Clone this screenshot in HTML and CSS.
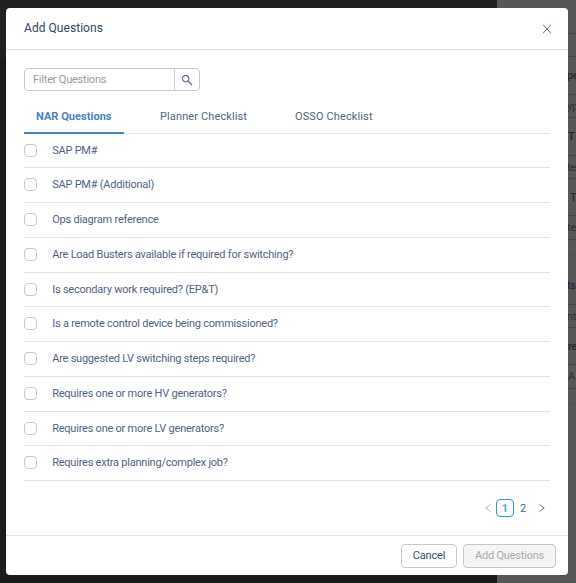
FILE: index.html
```html
<!DOCTYPE html>
<html lang="en">
<head>
<meta charset="utf-8">
<title>Add Questions</title>
<link rel="stylesheet" href="styles.css">
</head>
<body>
<div class="backdrop">
  <div class="canvas"></div>
  <div class="panel">
    <div class="r h34"></div>
    <div class="r h23"></div>
    <div class="r h38 label">pe</div>
    <div class="r h23">yp</div>
    <div class="r h38 label navy gap2">T</div>
    <div class="r h23">te</div>
    <div class="r h37 label gap4">T</div>
    <div class="r h24">te</div>
    <div class="r h15 faint"></div>
    <div class="r h50 label navy low">ts</div>
    <div class="r h23">nt</div>
    <div class="r h37 label gap1">re</div>
    <div class="r h24 gap1">A</div>
    <div class="r h15 faint"></div>
  </div>
</div>
<main class="modal">
  <header class="head">
    <h1>Add Questions</h1>
    <svg class="close" viewBox="0 0 10 10"><path d="M1 .7 9 9.3M9 .7 1 9.3"/></svg>
  </header>
  <section class="body">
    <div class="search">
      <span class="field">Filter Questions</span>
      <span class="go"><svg viewBox="0 0 12 12"><circle cx="4.6" cy="4.6" r="3.2"/><path d="M7 7 11 11"/></svg></span>
    </div>
    <nav class="tabs">
      <span class="tab active">NAR Questions</span>
      <span class="tab">Planner Checklist</span>
      <span class="tab">OSSO Checklist</span>
    </nav>
    <ul class="list">
      <li><i></i><span>SAP PM#</span></li>
      <li><i></i><span>SAP PM# (Additional)</span></li>
      <li><i></i><span>Ops diagram reference</span></li>
      <li><i></i><span>Are Load Busters available if required for switching?</span></li>
      <li><i></i><span>Is secondary work required? (EP&amp;T)</span></li>
      <li><i></i><span>Is a remote control device being commissioned?</span></li>
      <li><i></i><span>Are suggested LV switching steps required?</span></li>
      <li><i></i><span>Requires one or more HV generators?</span></li>
      <li><i></i><span>Requires one or more LV generators?</span></li>
      <li><i></i><span>Requires extra planning/complex job?</span></li>
    </ul>
    <div class="pager">
      <svg class="prev" viewBox="0 0 6 10"><path d="M5.5 1.5.8 5l4.7 3.5"/></svg>
      <span class="page current">1</span>
      <span class="page">2</span>
      <svg class="next" viewBox="0 0 6 10"><path d="M.5 1.5 5.2 5 .5 8.5"/></svg>
    </div>
  </section>
  <footer class="foot">
    <button class="btn cancel">Cancel</button>
    <button class="btn add" disabled>Add Questions</button>
  </footer>
</main>
</body>
</html>
```
FILE: styles.css
```css
* { box-sizing: border-box; }
body {
  margin: 0;
  width: 576px;
  height: 583px;
  padding: 8px 8px 8px 6px;
  overflow: hidden;
  font: 11px/16px Roboto, "Liberation Sans", sans-serif;
  color: #52637f;
}
.backdrop {
  position: absolute;
  inset: 0;
  z-index: -1;
  display: flex;
  background: #1b1b1b;
}
.canvas { width: 497px; height: 57px; background: #212121; }
.panel {
  flex: 1;
  height: 583px;
  background: #575757;
  color: #303030;
  overflow: hidden;
  letter-spacing: -.3px;
}
.r {
  display: flex;
  align-items: center;
  padding: 1px 0 0 70px;
  border-bottom: 1px solid #474747;
}
.faint { border-color: #505050; }
.label { font-weight: 500; color: #222a33; }
.navy { color: #1c2b40; }
.gap1 { padding-left: 71px; }
.gap2 { padding-left: 71px; }
.gap4 { padding-left: 73px; }
.low { padding-top: 12px; }
.h15 { height: 15px; }
.h23 { height: 23px; }
.h24 { height: 24px; }
.h34 { height: 34px; }
.h37 { height: 37px; }
.h38 { height: 38px; }
.h50 { height: 50px; }

.modal {
  display: flex;
  flex-direction: column;
  width: 562px;
  height: 567px;
  background: #fff;
  border-radius: 4px;
}
.head {
  display: flex;
  align-items: center;
  justify-content: space-between;
  height: 42px;
  padding: 0 16px 2px 18px;
  border-bottom: 1px solid #e4e4e4;
}
h1 { margin: 0; font-size: 12px; font-weight: 400; color: #33455f; letter-spacing: .05px; }
svg { fill: none; stroke: #5b7190; }
.close { width: 10px; height: 10px; margin-top: 2px; }
.body { flex: 1; padding: 18px 18px 0; }
.search {
  display: flex;
  width: 176px;
  height: 23px;
  border: 1px solid #c9c9c9;
  border-radius: 4px;
}
.field {
  flex: 1;
  padding: 3px 8px 2px;
  color: #9b9b9b;
  letter-spacing: -.22px;
  border-right: 1px solid #d5d5d5;
}
.go { display: flex; width: 24px; align-items: center; justify-content: center; }
.go svg { width: 12px; height: 12px; stroke-width: 1.2; }
.tabs {
  display: flex;
  gap: 24px;
  height: 43px;
  border-bottom: 1px solid #e5e5e5;
}
.tab { height: 43px; padding: 18px 12px 0; letter-spacing: .12px; }
.tab:nth-child(2) { width: 111px; white-space: nowrap; }
.tab.active { width: 100px; color: #4683c4; font-weight: 700; letter-spacing: .04px; border-bottom: 2px solid #4683c4; }
.list { margin: 0; padding: 0; list-style: none; }
.list li {
  display: flex;
  align-items: center;
  gap: 15.2px;
  height: 34.75px;
  padding-bottom: 1px;
  border-bottom: 1px solid #e3e3e3;
  letter-spacing: -.23px;
}
.list span { padding-top: 1px; }
.list li:first-child { height: 34.4px; }
.list i { width: 13px; height: 13px; border: 1px solid #c9c9c9; border-radius: 4px; }
.pager {
  display: flex;
  align-items: center;
  justify-content: flex-end;
  height: 18px;
  margin-top: 18px;
  padding-right: 5px;
}
.page { width: 18px; height: 18px; text-align: center; line-height: 19px; }
.current { line-height: 17px; font-weight: 700; color: #50a5f8; border: 1px solid #2d90f4; border-radius: 4px; }
.pager svg { width: 6px; height: 10px; }
.prev { margin-right: 5.5px; stroke: #aeb5be; }
.next { margin-left: 7px; }
.foot {
  display: flex;
  justify-content: flex-end;
  gap: 6px;
  height: 40px;
  padding: 8px 12px;
  border-top: 1px solid #e4e4e4;
}
.btn {
  height: 24px;
  padding: 0;
  font: 11px/16px Roboto, "Liberation Sans", sans-serif;
  border: 1px solid #c8c8c8;
  border-radius: 4px;
}
.cancel { width: 56px; background: #fff; color: #3b4d67; letter-spacing: -.15px; }
.add { width: 93px; background: #f5f5f5; color: #a9a9a9; letter-spacing: -.2px; }
```
